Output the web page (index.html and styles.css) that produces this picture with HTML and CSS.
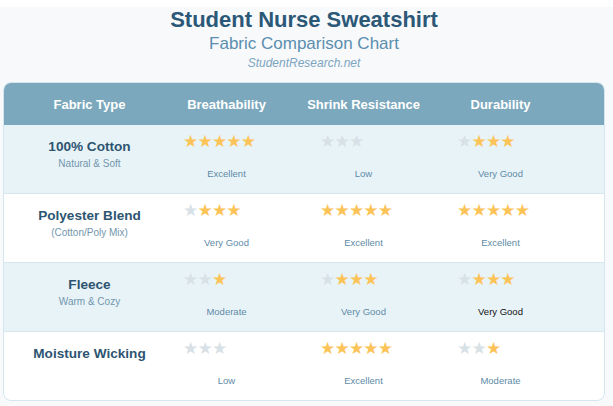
FILE: index.html
```html
<!DOCTYPE html>
<html lang="en">
<head>
  <meta charset="UTF-8">
  <meta name="viewport" content="width=device-width, initial-scale=1.0">
  <title>Student Nurse Sweatshirt - Fabric Comparison Chart</title>
  <link rel="stylesheet" href="styles.css">
</head>
<body>
  <div class="page">
    <h1>Student Nurse Sweatshirt</h1>
    <h2>Fabric Comparison Chart</h2>
    <p class="site">StudentResearch.net</p>

    <div class="chart">
      <div class="row head">
        <div>Fabric Type</div>
        <div>Breathability</div>
        <div>Shrink Resistance</div>
        <div>Durability</div>
      </div>

      <div class="row shade">
        <div class="fabric">
          <span class="name">100% Cotton</span>
          <span class="note">Natural &amp; Soft</span>
        </div>
        <div class="cell">
          <span class="stars"><b>★★★★★</b></span>
          <span class="label">Excellent</span>
        </div>
        <div class="cell">
          <span class="stars"><i>★★★</i></span>
          <span class="label">Low</span>
        </div>
        <div class="cell">
          <span class="stars"><i>★</i><b>★★★</b></span>
          <span class="label">Very Good</span>
        </div>
      </div>

      <div class="row">
        <div class="fabric">
          <span class="name">Polyester Blend</span>
          <span class="note">(Cotton/Poly Mix)</span>
        </div>
        <div class="cell">
          <span class="stars"><i>★</i><b>★★★</b></span>
          <span class="label">Very Good</span>
        </div>
        <div class="cell">
          <span class="stars"><b>★★★★★</b></span>
          <span class="label">Excellent</span>
        </div>
        <div class="cell">
          <span class="stars"><b>★★★★★</b></span>
          <span class="label">Excellent</span>
        </div>
      </div>

      <div class="row shade">
        <div class="fabric">
          <span class="name">Fleece</span>
          <span class="note">Warm &amp; Cozy</span>
        </div>
        <div class="cell">
          <span class="stars"><i>★★</i><b>★</b></span>
          <span class="label">Moderate</span>
        </div>
        <div class="cell">
          <span class="stars"><i>★</i><b>★★★</b></span>
          <span class="label">Very Good</span>
        </div>
        <div class="cell">
          <span class="stars"><i>★</i><b>★★★</b></span>
          <span class="label dark">Very Good</span>
        </div>
      </div>

      <div class="row">
        <div class="fabric">
          <span class="name">Moisture Wicking</span>
        </div>
        <div class="cell">
          <span class="stars"><i>★★★</i></span>
          <span class="label">Low</span>
        </div>
        <div class="cell">
          <span class="stars"><b>★★★★★</b></span>
          <span class="label">Excellent</span>
        </div>
        <div class="cell">
          <span class="stars"><i>★★</i><b>★</b></span>
          <span class="label">Moderate</span>
        </div>
      </div>
    </div>
  </div>
</body>
</html>
```

FILE: styles.css
```css
body {
  margin: 0;
  background: #fff;
  font-family: 'Liberation Sans', Arial, sans-serif;
}

.page {
  margin-top: 7px;
  height: 399px;
  padding: 0 8px 0 3px;
  background: #f7f9fb;
  text-align: center;
}

h1 {
  margin: 0;
  font-size: 22px;
  line-height: 25px;
  color: #2c5878;
}

h2 {
  margin: 2px 0 0;
  font-size: 17px;
  font-weight: normal;
  line-height: 19px;
  color: #5b8eae;
}

.site {
  margin: 3px 0 0;
  font-size: 12px;
  font-style: italic;
  line-height: 14px;
  color: #7ca5bf;
}

.chart {
  margin-top: 12px;
  background: #fff;
  border: 1px solid #d6e6ee;
  border-radius: 8px;
  overflow: hidden;
}

.row {
  display: grid;
  grid-template-columns: repeat(4, 137px);
  padding-left: 17px;
  height: 68px;
  border-bottom: 1px solid #d8e7ee;
}

.row:last-child {
  border-bottom: none;
}

.row.head {
  height: 42px;
  align-items: center;
  background: #7ba8bd;
  color: #fff;
  font-size: 13px;
  font-weight: bold;
  border-bottom: none;
}

.row.shade {
  background: #e8f3f8;
}

.fabric {
  display: flex;
  flex-direction: column;
  padding-top: 14px;
}

.name {
  font-size: 13.6px;
  font-weight: bold;
  color: #2d5471;
}

.note {
  margin-top: 4px;
  font-size: 10px;
  color: #7296ad;
}

.cell {
  display: flex;
  flex-direction: column;
  text-align: left;
}

.stars {
  padding: 6px 0 0 25px;
  height: 37px;
  font-family: 'DejaVu Sans', sans-serif;
  font-size: 17px;
  line-height: 20px;
  letter-spacing: -0.8px;
}

.stars b {
  font-weight: normal;
  color: #fcc458;
}

.stars i {
  font-style: normal;
  color: #d7e1e6;
}

.label {
  text-align: center;
  font-size: 9.5px;
  color: #5e8aa6;
}

.label.dark {
  color: #111;
}
```
